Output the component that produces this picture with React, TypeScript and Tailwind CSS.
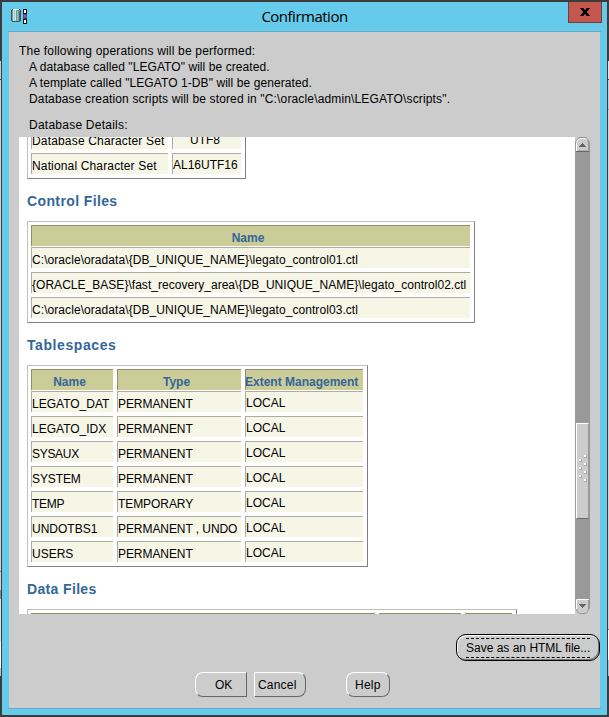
import React from 'react';

type CellText = { text: string; tracking?: string };

const cellBase =
  'h-[21px] border-t border-l border-[#acac9f] bg-[#f6f6e7] leading-5 whitespace-pre';
const headBase =
  'h-[21px] border-t border-l border-[#90906c] bg-[#cccc99] pt-0.5 text-center font-bold leading-5 text-[#336699] whitespace-pre';
const frame = 'w-fit border border-t-[#c0c0c0] border-l-[#c0c0c0] border-r-[#808080] border-b-[#808080] p-[3px] pr-1 pb-1';

function Cell({ text, tracking = '', className = '', raised = false }: CellText & { className?: string; raised?: boolean }) {
  return <div className={`${cellBase} ${raised ? 'pt-px' : 'pt-0.5'} ${tracking} ${className}`}>{text}</div>;
}

function Heading({ text, tracking }: { text: string; tracking: string }) {
  return <h2 className={`mt-3 mb-2.5 text-sm leading-5 font-bold text-[#336699] ${tracking}`}>{text}</h2>;
}

const controlFiles: CellText[] = [
  { text: 'C:\\oracle\\oradata\\{DB_UNIQUE_NAME}\\legato_control01.ctl', tracking: 'tracking-[0.07px]' },
  { text: '{ORACLE_BASE}\\fast_recovery_area\\{DB_UNIQUE_NAME}\\legato_control02.ctl', tracking: 'tracking-[0.03px]' },
  { text: 'C:\\oracle\\oradata\\{DB_UNIQUE_NAME}\\legato_control03.ctl', tracking: 'tracking-[0.07px]' },
];

const tablespaces: { name: CellText; type: string }[] = [
  { name: { text: 'LEGATO_DAT' }, type: 'PERMANENT' },
  { name: { text: 'LEGATO_IDX' }, type: 'PERMANENT' },
  { name: { text: 'SYSAUX', tracking: 'tracking-[-0.3px]' }, type: 'PERMANENT' },
  { name: { text: 'SYSTEM', tracking: 'tracking-[-0.1px]' }, type: 'PERMANENT' },
  { name: { text: 'TEMP', tracking: 'tracking-[-0.3px]' }, type: 'TEMPORARY' },
  { name: { text: 'UNDOTBS1' }, type: 'PERMANENT , UNDO' },
  { name: { text: 'USERS' }, type: 'PERMANENT' },
];

function AppIcon() {
  return (
    <svg className="block" width="18" height="16" viewBox="0 0 18 16" shapeRendering="crispEdges">
      <path d="M2 1h8v1h1v11h-1v1H2v-1H1V2h1z" fill="#31595d" />
      <path d="M2 2h8v11H2z" fill="#739e9e" />
      <path d="M3 2h1v11H3zM5 2h1v11H5z" fill="#d5e5e3" />
      <path d="M4 2h1v11H4z" fill="#a9c9c6" />
      <path d="M7 3h1v10H7z" fill="#9fbdba" />
      <path d="M9 3h1v10H9z" fill="#426d70" />
      <path d="M3 1h6v1H3z" fill="#e9efee" />
      <path d="M13 1h4v5h-4zM13 11h4v5h-4z" fill="#071019" />
      <path d="M14 2h2v3h-2zM14 12h2v3h-2z" fill="#fff" />
      <path d="M13 6h4v5h-4z" fill="#43536e" />
      <path d="M14 7h2v2h-2z" fill="#d03bd0" />
    </svg>
  );
}

function ArrowButton({ down = false }: { down?: boolean }) {
  return (
    <svg className="block shrink-0" width="15" height="15" viewBox="0 0 15 15">
      {down ? (
        <>
          <path d="M0 15V0h15v15z" fill="#999" />
          <path d="M0 15V9l5 6zM15 15V9l-5 6z" fill="#ccc" />
          <path d="M1.500.5h12v9.500q-1 4.500-4.500 4.500h-3q-3.500 0-4.500-4.500z" fill="#ccc" stroke="#999" />
          <path d="M1.500 10V.5H14" fill="none" stroke="#fff" />
          <path d="M4 5h7v1h-1v1h-1v1h-1v1h-1V8H6V7H5V6H4z" fill="#666" shapeRendering="crispEdges" />
        </>
      ) : (
        <>
          <path d="M0 0h15v15H0z" fill="#999" />
          <path d="M0 0h4L0 5zM15 0h-4l4 5z" fill="#ccc" />
          <path d="M1.500 14V5.500q1-4.500 4.500-4.500h3q3.500 0 4.500 4.500V14z" fill="#ccc" stroke="#999" />
          <path d="M1.500 14V5.500q1-4 4.500-4h3q2 0 3 1" fill="none" stroke="#fff" />
          <path d="M1 14.500h13" stroke="#666" />
          <path d="M4 10h7V9h-1V8H9V7H8V6H7v1H6v1H5v1H4z" fill="#666" shapeRendering="crispEdges" />
        </>
      )}
    </svg>
  );
}

const gripDots = [
  [9, 0], [4, 4], [9, 8], [4, 12], [9, 16], [4, 20], [9, 24],
];

function ScrollBar() {
  return (
    <div className="flex h-[477px] w-[15px] flex-col bg-[#999]">
      <ArrowButton />
      <div className="flex-1" />
      <div className="ml-px h-24 w-[13px] border-t border-r border-b border-l border-t-white border-r-[#999] border-b-[#666] border-l-white bg-[#ccc] pt-[31px]">
        <svg className="-ml-0.5 block" width="13" height="28" shapeRendering="crispEdges">
          {gripDots.map(([x, y]) => (
            <g key={`${x}-${y}`}>
              <path d={`M${x} ${y}h3v3h-3z`} fill="#aaa" />
              <path d={`M${x} ${y}h2v2h-2z`} fill="#fff" />
            </g>
          ))}
        </svg>
      </div>
      <div className="h-20" />
      <ArrowButton down />
    </div>
  );
}

const buttonBase =
  'flex h-[25px] items-center border border-t-white border-l-white border-r-[#666] border-b-[#666] pt-px text-xs leading-4';

export default function App() {
  return (
    <div className="flex h-[717px] w-[609px] flex-col bg-[#3c3c3f] pt-0.5 text-xs text-black [font-family:'Liberation_Sans',Arial,sans-serif]">
      <div className="flex h-[713px]">
        <div className="flex w-px flex-col pt-[59px]">
          <div className="h-[18px] bg-[#c9cdd0]" />
          <div className="h-px bg-[#444]" />
          <div className="h-[491px] bg-[#d3d3d3]" />
          <div className="h-px bg-[#888]" />
          <div className="h-[18px] bg-[#d3d3d3]" />
          <div className="h-[9px] bg-[#888]" />
          <div className="h-[43px] bg-[#dce3e6]" />
          <div className="h-[26px] bg-white" />
          <div className="h-2 bg-[#aec4cc]" />
        </div>
        <div className="ml-px flex w-[605px] flex-col bg-[#66caea]">
          <header className="flex h-[29px] justify-between">
            <div className="w-[34px] pt-1.5 pl-2">
              <AppIcon />
            </div>
            <h1 className="h-[29px] pl-[5px] text-[15px] leading-[29px] tracking-[-0.5px] [font-family:'Open_Sans','Noto_Sans',sans-serif]">Confirmation</h1>
            <button className="mr-[5px] flex h-[21px] w-[34px] items-center justify-center border border-t-0 border-[#703c3c] bg-[#c4584f]">
              <svg width="10" height="8" viewBox="0 0 10 8">
                <path d="M0 0h3.300L5 2.300 6.700 0H10L6.800 4 10 8H6.700L5 5.700 3.300 8H0l3.200-4z" fill="#000" />
              </svg>
            </button>
          </header>
          <div className="mx-[6px] h-px bg-[#68a9c6]" />
          <main className="mr-[7px] ml-[7px] flex h-[676px] flex-col bg-[#ccc]">
            <div className="h-[105px] pt-[11px] pl-2.5 leading-4 whitespace-pre">
              <p className="tracking-[0.19px]">The following operations will be performed:</p>
              <p className="pl-2.5 tracking-[0.07px]">A database called "LEGATO" will be created.</p>
              <p className="pl-2.5 tracking-[0.08px]">A template called "LEGATO 1-DB" will be generated.</p>
              <p className="pl-2.5 tracking-[0.15px]">{'Database creation scripts will be stored in "C:\\oracle\\admin\\LEGATO\\scripts".'}</p>
              <p className="mt-2.5 pl-2.5 tracking-[0.24px]">Database Details:</p>
            </div>
            <div className="ml-2.5 flex h-[477px]">
              <section className="h-[477px] w-[556px] overflow-hidden bg-white pl-2">
                <div className={`-mt-[13px] grid grid-cols-[137px_69px] gap-1 ${frame}`}>
                  <Cell text="Database Character Set" tracking="tracking-[0.17px]" />
                  <Cell text="UTF8" raised className="pr-1 text-center" />
                  <Cell text="National Character Set" tracking="tracking-[0.15px]" />
                  <Cell text="AL16UTF16" raised />
                </div>

                <Heading text="Control Files" tracking="tracking-[0.38px]" />
                <div className={`grid grid-cols-[439px] gap-1 ${frame}`}>
                  <div className={`${headBase} -mb-[3px] pr-1.5`}>Name</div>
                  {controlFiles.map((file) => (
                    <Cell key={file.text} {...file} />
                  ))}
                </div>

                <Heading text="Tablespaces" tracking="tracking-[0.58px]" />
                <div className={`grid grid-cols-[82px_124px_118px] gap-1 ${frame}`}>
                  <div className={`${headBase} -mb-[3px] pr-1.5`}>Name</div>
                  <div className={`${headBase} -mb-[3px] pr-1.5`}>Type</div>
                  <div className={`${headBase} -mb-[3px] -indent-px pr-1.5`}>Extent Management</div>
                  {tablespaces.map(({ name, type }) => (
                    <React.Fragment key={name.text}>
                      <Cell {...name} />
                      <Cell text={type} tracking="tracking-[-0.07px]" />
                      <Cell text="LOCAL" raised />
                    </React.Fragment>
                  ))}
                </div>

                <Heading text="Data Files" tracking="tracking-[0.35px]" />
                <div className={`grid grid-cols-[344px_82px_47px] gap-1 ${frame}`}>
                  <div className={headBase} />
                  <div className={headBase} />
                  <div className={headBase} />
                </div>
              </section>
              <ScrollBar />
            </div>
            <div className="mt-5 flex justify-end">
              <button className="flex h-[27px] w-36 items-center justify-center rounded-[10px] border border-black shadow-[inset_1px_1px_0_#fff,inset_-1px_-1px_0_#777]">
                <span className="h-5 w-[124px] border-y border-dashed border-black text-xs leading-[18px] whitespace-nowrap">Save as an HTML file...</span>
              </button>
            </div>
            <div className="mt-[11px] ml-[186px] flex">
              <button className={`${buttonBase} w-[52px] rounded-l-lg pl-[19px]`}>OK</button>
              <button className={`${buttonBase} ml-[7px] w-[52px] rounded-r-lg pl-[3px] tracking-[0.2px]`}>Cancel</button>
              <button className={`${buttonBase} ml-10 w-11 rounded-lg pl-2 tracking-[0.25px]`}>Help</button>
            </div>
          </main>
          <div className="mx-[6px] h-px bg-[#68a9c6]" />
        </div>
        <div className="ml-px flex w-px flex-col pt-[59px]">
          <div className="h-[18px] bg-[#dfe3e6]" />
          <div className="h-px bg-[#444]" />
          <div className="h-[29px] bg-[#b9ced8]" />
          <div className="h-px bg-[#999]" />
          <div className="h-[519px] bg-[#d3d3d3]" />
          <div className="h-px bg-[#777]" />
          <div className="h-[30px] bg-white" />
          <div className="h-4 bg-[#aec4cc]" />
        </div>
      </div>
    </div>
  );
}
